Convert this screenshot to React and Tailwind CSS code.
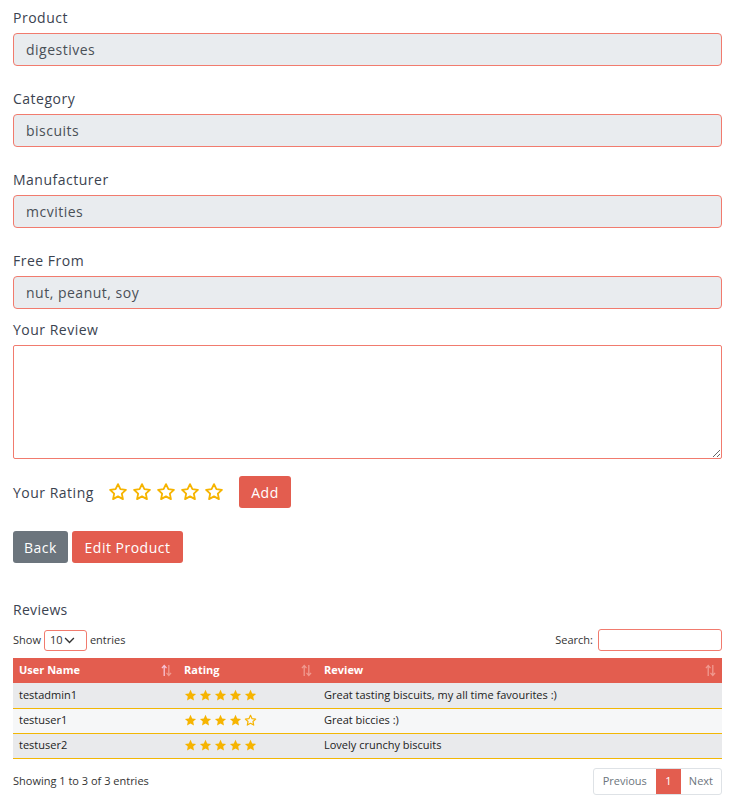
import React from "react";

const formFont = { fontFamily: "'Open Sans', 'Liberation Sans', sans-serif" };

function StarOutline({ className = "" }) {
  return (
    <svg viewBox="0 0 24 24" className={className} fill="none" stroke="#f6b400" strokeWidth="2.2" strokeLinejoin="round">
      <polygon points="12,2.5 14.9,8.6 21.5,9.4 16.6,13.9 17.9,20.5 12,17.2 6.1,20.5 7.4,13.9 2.5,9.4 9.1,8.6" />
    </svg>
  );
}

function StarSolid({ className = "" }) {
  return (
    <svg viewBox="0 0 24 24" className={className} fill="#f6b400">
      <polygon points="12,1.5 15.1,8.1 22.3,9 17,14 18.4,21.2 12,17.6 5.6,21.2 7,14 1.7,9 8.9,8.1" />
    </svg>
  );
}

function SortIcon({ active }) {
  return (
    <svg viewBox="0 0 12 14" className="w-[11px] h-[13px]">
      <g strokeWidth="1.4" fill="none">
        <path d="M3.5 13V2M1 4.5L3.5 1.5L6 4.5" stroke={active ? "#f7c4d8" : "#f09a90"} />
        <path d="M8.5 1V12M6 9.5L8.5 12.5L11 9.5" stroke="#f09a90" />
      </g>
    </svg>
  );
}

function Field({ label, value, gap = "mb-[23px]" }) {
  return (
    <div className={gap}>
      <label className="block text-[14px] leading-[21px] mb-[4px] -mt-[1px] pb-[1px] text-[#3b4350] tracking-[0.5px]">{label}</label>
      <div className="h-[33px] border border-[#f17b6e] rounded-[4px] bg-[#e9ecef] px-[12px] flex items-center text-[14px] text-[#495057] tracking-[0.5px]">
        {value}
      </div>
    </div>
  );
}

const reviews = [
  { user: "testadmin1", rating: 5, text: "Great tasting biscuits, my all time favourites :)", bg: "bg-[#e9eaec]" },
  { user: "testuser1", rating: 4, text: "Great biccies :)", bg: "bg-[#f6f7f8]" },
  { user: "testuser2", rating: 5, text: "Lovely crunchy biscuits", bg: "bg-[#e9eaec]" },
];

export default function App() {
  return (
    <div className="bg-white w-[732px] min-h-[809px] pl-[13px] pr-[10px] pt-[8px] pb-[16px] text-[#212529]" style={formFont}>
      <Field label="Product" value="digestives" />
      <Field label="Category" value="biscuits" />
      <Field label="Manufacturer" value="mcvities" />
      <Field label="Free From" value="nut, peanut, soy" gap="mb-[11px]" />

      <label className="block text-[14px] leading-[21px] mb-[4px] -mt-[1px] pb-[1px] text-[#3b4350] tracking-[0.5px]">Your Review</label>
      <textarea className="block w-full h-[114px] border border-[#f17b6e] rounded-[2px] bg-white outline-none resize-y"></textarea>

      <div className="flex items-center mt-[17px] h-[32px]">
        <span className="text-[14px] text-[#3b4350] w-[95px] tracking-[0.5px]">Your Rating</span>
        <div className="flex gap-[4px]">
          {[0, 1, 2, 3, 4].map((i) => (
            <StarOutline key={i} className="w-[20px] h-[20px]" />
          ))}
        </div>
        <button className="ml-[15px] h-[32px] w-[52px] rounded-[3px] bg-[#e35d4f] text-white text-[14px] tracking-[0.5px]">Add</button>
      </div>

      <div className="flex gap-[4px] mt-[23px]">
        <button className="h-[32px] w-[55px] rounded-[3px] bg-[#6c757d] text-white text-[14px] tracking-[0.5px]">Back</button>
        <button className="h-[32px] w-[111px] rounded-[3px] bg-[#e35d4f] text-white text-[14px] tracking-[0.5px]">Edit Product</button>
      </div>

      <div className="mt-[36px] text-[14px] leading-[21px] text-[#3b4350] tracking-[0.3px]">Reviews</div>

      <div className="flex items-center justify-between mt-[9px] text-[11px] text-[#333]">
        <div className="flex items-center gap-[3px]">
          <span>Show</span>
          <div className="w-[43px] h-[21px] border border-[#f17b6e] rounded-[3px] flex items-center pl-[5px] gap-[1px]">
            <span>10</span>
            <svg viewBox="0 0 12 8" className="w-[11px] h-[7px]" fill="none" stroke="#333" strokeWidth="1.6">
              <path d="M1 1.2L6 6.2L11 1.2" />
            </svg>
          </div>
          <span>entries</span>
        </div>
        <div className="flex items-center gap-[5px]">
          <span>Search:</span>
          <div className="w-[124px] h-[22px] border border-[#f17b6e] rounded-[3px]"></div>
        </div>
      </div>

      <table className="w-full mt-[7px] border-collapse text-[11px]">
        <thead>
          <tr className="bg-[#e35d4f] text-white h-[25px]">
            <th className="text-left font-bold px-[6px] w-[165px]">
              <div className="flex items-center justify-between">User Name<SortIcon active /></div>
            </th>
            <th className="text-left font-bold px-[6px] w-[140px]">
              <div className="flex items-center justify-between">Rating<SortIcon /></div>
            </th>
            <th className="text-left font-bold px-[6px]">
              <div className="flex items-center justify-between">Review<SortIcon /></div>
            </th>
          </tr>
        </thead>
        <tbody>
          {reviews.map((r) => (
            <tr key={r.user} className={`${r.bg} h-[25px] border-b border-[#f2b705] text-[#222]`}>
              <td className="px-[6px]">{r.user}</td>
              <td className="px-[6px]">
                <div className="flex gap-[2px]">
                  {[0, 1, 2, 3, 4].map((i) =>
                    i < r.rating ? (
                      <StarSolid key={i} className="w-[13px] h-[13px]" />
                    ) : (
                      <StarOutline key={i} className="w-[13px] h-[13px]" />
                    )
                  )}
                </div>
              </td>
              <td className="px-[6px]">{r.text}</td>
            </tr>
          ))}
        </tbody>
      </table>

      <div className="flex items-center justify-between mt-[9px] text-[11px]">
        <span className="text-[#333]">Showing 1 to 3 of 3 entries</span>
        <div className="flex h-[27px] border border-[#dee2e6] rounded-[3px] overflow-hidden text-[#6c757d]">
          <span className="px-[9px] flex items-center">Previous</span>
          <span className="w-[25px] flex items-center justify-center bg-[#e35d4f] text-white">1</span>
          <span className="px-[8px] flex items-center">Next</span>
        </div>
      </div>
    </div>
  );
}
